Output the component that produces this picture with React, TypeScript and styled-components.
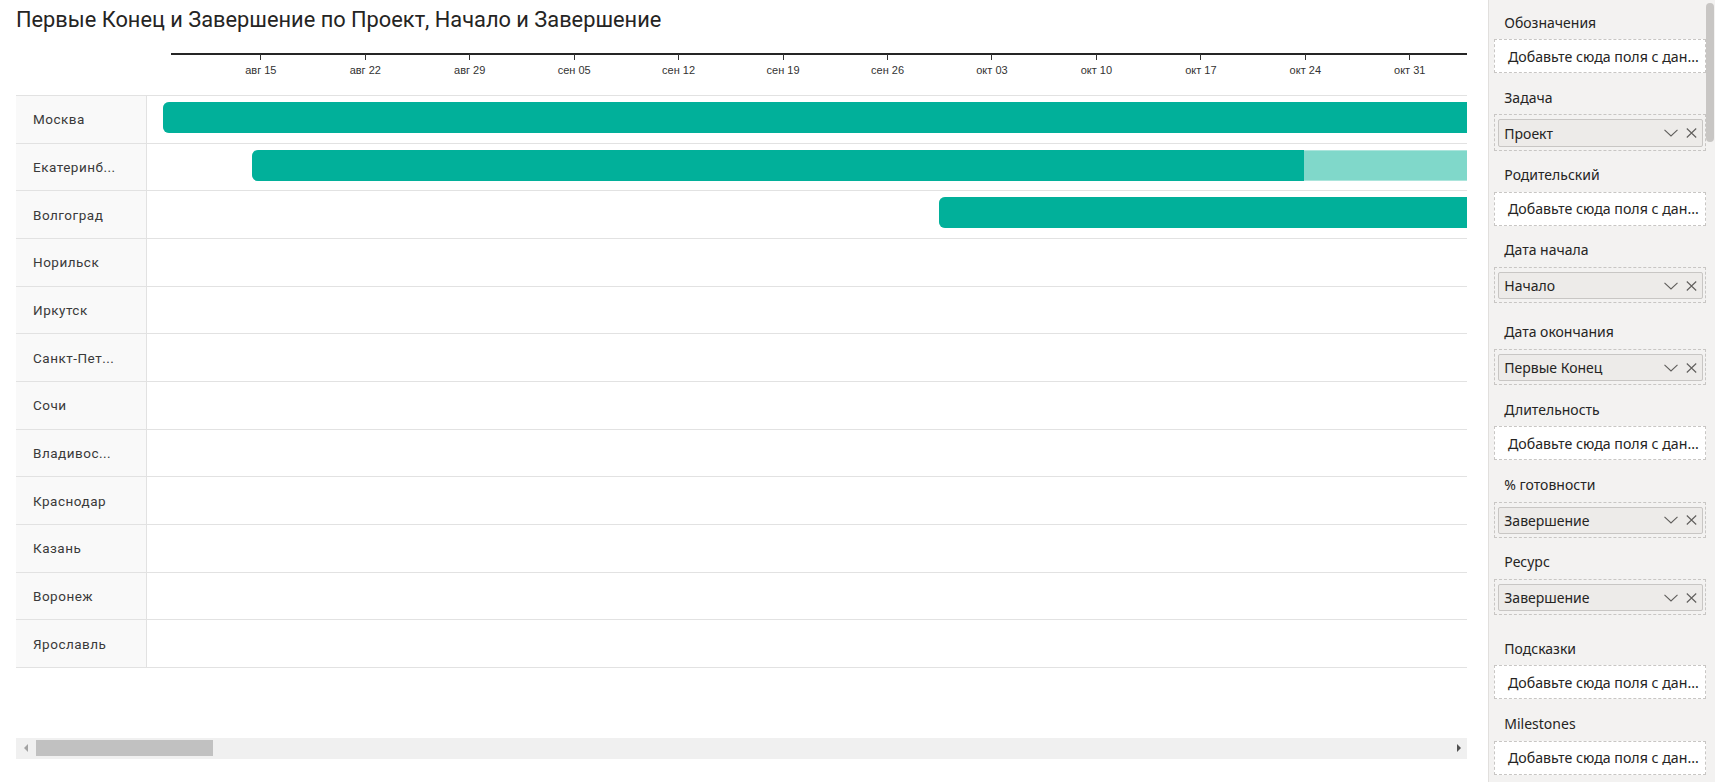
import React from "react";
import styled, { createGlobalStyle } from "styled-components";

const GlobalStyle = createGlobalStyle`
  html, body {
    margin: 0;
    padding: 0;
    background: #ffffff;
    overflow: hidden;
  }
  * {
    box-sizing: border-box;
  }
`;

const DAY = 104.45 / 7;
const TICK_START = 89.8;
const ticks = [
  "авг 15",
  "авг 22",
  "авг 29",
  "сен 05",
  "сен 12",
  "сен 19",
  "сен 26",
  "окт 03",
  "окт 10",
  "окт 17",
  "окт 24",
  "окт 31",
];

interface Task {
  name: string;
  start?: number; // px from the chart column
  progress?: number; // share of the visible bar
}

const tasks: Task[] = [
  { name: "Москва", start: 15.7, progress: 1 },
  { name: "Екатеринб...", start: 104.7, progress: 0.866 },
  { name: "Волгоград", start: 792, progress: 1 },
  { name: "Норильск" },
  { name: "Иркутск" },
  { name: "Санкт-Пет..." },
  { name: "Сочи" },
  { name: "Владивос..." },
  { name: "Краснодар" },
  { name: "Казань" },
  { name: "Воронеж" },
  { name: "Ярославль" },
];

interface Well {
  label: string;
  field?: string;
  extra?: number;
}

const wells: Well[] = [
  { label: "Обозначения" },
  { label: "Задача", field: "Проект" },
  { label: "Родительский" },
  { label: "Дата начала", field: "Начало", extra: 4.5 },
  { label: "Дата окончания", field: "Первые Конец" },
  { label: "Длительность" },
  { label: "% готовности", field: "Завершение" },
  { label: "Ресурс", field: "Завершение", extra: 9 },
  { label: "Подсказки" },
  { label: "Milestones" },
];

const ChevronIcon = () => (
  <svg width="14" height="8" viewBox="0 0 14 8" fill="none">
    <path d="M0.5 0.8 L7 7 L13.5 0.8" stroke="#605e5c" strokeWidth="1.1" />
  </svg>
);

const CloseIcon = () => (
  <svg width="11" height="10" viewBox="0 0 11 10" fill="none">
    <path d="M0.8 0.5 L10.2 9.5 M10.2 0.5 L0.8 9.5" stroke="#605e5c" strokeWidth="1.1" />
  </svg>
);

const App = () => {
  return (
    <Page>
      <GlobalStyle />
      <Visual>
        <Title>Первые Конец и Завершение по Проект, Начало и Завершение</Title>
        <Axis>
          <AxisLine />
          {ticks.map((t, i) => (
            <Tick key={t} style={{ left: TICK_START + i * 7 * DAY }}>
              <TickMark />
              <TickLabel>{t}</TickLabel>
            </Tick>
          ))}
        </Axis>
        <Table>
          {tasks.map((task) => (
            <Row key={task.name}>
              <NameCell>{task.name}</NameCell>
              <ChartCell>
                {task.start !== undefined && (
                  <Bar style={{ marginLeft: task.start }}>
                    <BarDone style={{ width: `${(task.progress ?? 1) * 100}%` }} />
                  </Bar>
                )}
              </ChartCell>
            </Row>
          ))}
        </Table>
        <HScroll>
          <ArrowLeft />
          <HThumb />
          <ArrowRight />
        </HScroll>
      </Visual>
      <Pane>
        <PaneContent>
          {wells.map((w) => (
            <Section key={w.label} $extra={w.extra ?? 0}>
              <WellLabel>{w.label}</WellLabel>
              {w.field ? (
                <FilledWell>
                  <Pill>
                    <PillText>{w.field}</PillText>
                    <PillIcons>
                      <ChevronIcon />
                      <CloseIcon />
                    </PillIcons>
                  </Pill>
                </FilledWell>
              ) : (
                <EmptyWell>Добавьте сюда поля с дан...</EmptyWell>
              )}
            </Section>
          ))}
        </PaneContent>
        <VScroll>
          <VThumb />
        </VScroll>
      </Pane>
    </Page>
  );
};

export default App;

const Page = styled.div`
  display: flex;
  width: 1715px;
  height: 782px;
  overflow: hidden;
`;

const Visual = styled.div`
  width: 1488px;
  flex-shrink: 0;
  padding: 0 21px 0 16px;
  display: flex;
  flex-direction: column;
`;

const Title = styled.div`
  height: 36px;
  padding-top: 6px;
  font-family: Roboto, "Noto Sans", sans-serif;
  font-size: 21.8px;
  line-height: 28px;
  color: #252423;
  white-space: nowrap;
`;

const Axis = styled.div`
  position: relative;
  height: 59px;
  margin-left: 155px;
  padding-top: 17px;
`;

const AxisLine = styled.div`
  height: 2px;
  background: #252525;
`;

const Tick = styled.div`
  position: absolute;
  top: 18px;
  width: 0;
  display: flex;
  flex-direction: column;
  align-items: center;
`;

const TickMark = styled.div`
  width: 1px;
  height: 6px;
  background: #333333;
  flex-shrink: 0;
`;

const TickLabel = styled.div`
  margin-top: 4px;
  font-family: "Liberation Sans", Arial, sans-serif;
  font-size: 11px;
  line-height: 12px;
  color: #333333;
  white-space: nowrap;
`;

const Table = styled.div`
  border-top: 1px solid #e2e2e2;
`;

const Row = styled.div`
  display: grid;
  grid-template-columns: 131px 1fr;
  height: 47.67px;
  border-bottom: 1px solid #e2e2e2;
`;

const NameCell = styled.div`
  display: flex;
  align-items: center;
  padding-left: 17px;
  background: #f9f9f9;
  border-right: 1px solid #e2e2e2;
  font-family: Roboto, "Noto Sans", sans-serif;
  font-size: 13.5px;
  letter-spacing: 0.5px;
  color: #3a3a3a;
  white-space: nowrap;
`;

const ChartCell = styled.div`
  overflow: hidden;
  padding-top: 6px;
`;

const Bar = styled.div`
  height: 31px;
  border-radius: 6px 0 0 6px;
  background: #80d8ca;
  overflow: hidden;
  box-shadow: inset 0 1px 0 rgba(255, 255, 255, 0.35), inset 0 -1px 0 rgba(255, 255, 255, 0.35);
`;

const BarDone = styled.div`
  height: 100%;
  background: #01b09a;
`;

const HScroll = styled.div`
  margin-top: 70px;
  height: 21px;
  background: #f0f0f0;
  display: flex;
  align-items: center;
  padding: 0 6px 0 8px;
`;

const ArrowLeft = styled.div`
  width: 0;
  height: 0;
  border-top: 4px solid transparent;
  border-bottom: 4px solid transparent;
  border-right: 4px solid #a3a3a3;
`;

const HThumb = styled.div`
  margin-left: 7.7px;
  width: 177px;
  height: 16px;
  background: #c1c1c1;
`;

const ArrowRight = styled.div`
  margin-left: auto;
  width: 0;
  height: 0;
  border-top: 4px solid transparent;
  border-bottom: 4px solid transparent;
  border-left: 4px solid #505050;
`;

const Pane = styled.div`
  flex: 1;
  display: flex;
  background: #f3f2f1;
  border-left: 1px solid #e1dfdd;
`;

const PaneContent = styled.div`
  flex: 1;
  padding: 12.7px 0 0 5.3px;
  display: flex;
  flex-direction: column;
`;

const Section = styled.div<{ $extra: number }>`
  margin-bottom: ${({ $extra }) => 14.5 + $extra}px;
`;

const WellLabel = styled.div`
  padding-left: 10px;
  margin-bottom: 6.6px;
  font-family: "Noto Sans", "Open Sans", sans-serif;
  font-size: 14px;
  line-height: 20px;
  color: #252423;
  white-space: nowrap;
`;

const EmptyWell = styled.div`
  height: 34px;
  display: flex;
  align-items: center;
  padding-left: 12.7px;
  background: #ffffff;
  border: 1px dashed #c8c6c4;
  font-family: "Noto Sans", "Open Sans", sans-serif;
  font-size: 14.2px;
  color: #252423;
  white-space: nowrap;
  overflow: hidden;
`;

const FilledWell = styled.div`
  height: 36.4px;
  padding: 4px 2.4px 3px 3px;
  border: 1px dashed #c8c6c4;
`;

const Pill = styled.div`
  height: 27.4px;
  display: flex;
  align-items: center;
  padding: 0 5px 0 5px;
  background: #edebe9;
  border: 1px solid #c8c6c4;
  border-radius: 2px;
`;

const PillText = styled.div`
  flex: 1;
  font-family: "Noto Sans", "Open Sans", sans-serif;
  font-size: 14px;
  color: #252423;
  white-space: nowrap;
`;

const PillIcons = styled.div`
  display: flex;
  align-items: center;
  gap: 8px;
`;

const VScroll = styled.div`
  width: 9px;
  padding: 3px 1.5px 0 0;
`;

const VThumb = styled.div`
  width: 7.5px;
  height: 139px;
  border-radius: 4px;
  background: #c8c6c4;
`;
